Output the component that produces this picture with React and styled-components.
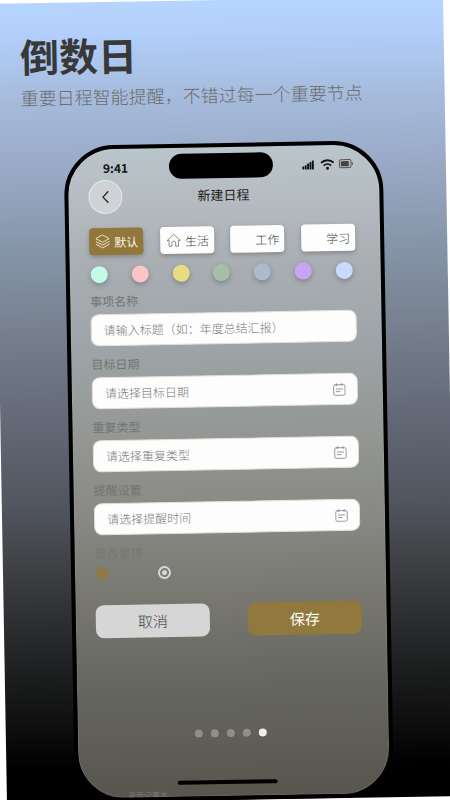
import React, { useState } from "react";
import styled, { createGlobalStyle, css } from "styled-components";

const categories = [
  { title: "默认", icon: "layers" },
  { title: "生活", icon: "home" },
  { title: "工作" },
  { title: "学习" },
];

const colors = [
  { name: "薄荷", value: "#c4fbe6" },
  { name: "粉色", value: "#fbc4c6" },
  { name: "黄色", value: "#e8dc82" },
  { name: "绿色", value: "#a8bfa6" },
  { name: "灰蓝", value: "#aabccb" },
  { name: "紫色", value: "#c9a4f4" },
  { name: "浅蓝", value: "#c8dbfb" },
];

const fields = [
  { id: "title", label: "事项名称", placeholder: "请输入标题（如：年度总结汇报）" },
  { id: "date", label: "目标日期", placeholder: "请选择目标日期", picker: true },
  { id: "repeat", label: "重复类型", placeholder: "请选择重复类型", picker: true },
  { id: "remind", label: "提醒设置", placeholder: "请选择提醒时间", picker: true },
];

const ChipIcon = ({ name, active }) => (
  <svg width="15" height="15" viewBox="0 0 15 15" fill="none" stroke={active ? "#f6efdc" : "#808080"} strokeWidth="0.9" strokeLinejoin="round" strokeLinecap="round">
    {name === "layers" && (
      <>
        <path d="M7.5 1 14 4.6 7.5 8.2 1 4.6Z" />
        <path d="M1 7.4 7.5 11 14 7.4" />
        <path d="M1 10.2 7.5 13.8 14 10.2" />
      </>
    )}
    {name === "home" && (
      <path d="M1 7.6 7.5 1.4 14 7.6H12.2V13.4H9.4V10.2A1.9 1.9 0 0 0 5.6 10.2V13.4H2.8V7.6Z" />
    )}
  </svg>
);

const CalendarIcon = () => (
  <svg width="13" height="13" viewBox="0 0 13 13" fill="none" stroke="#8c8c8c" strokeWidth="0.9" strokeLinecap="round">
    <rect x="0.8" y="1.7" width="11.4" height="10.6" rx="1.6" />
    <path d="M3.8 0.6V2.6M9.2 0.6V2.6M3.4 6H9.6M3.4 8.6H7.2" />
  </svg>
);

const StatusIcons = () => (
  <svg width="52" height="14" viewBox="0 0 52 14">
    <g fill="#111">
      <rect x="0.4" y="9" width="1.9" height="3" rx="0.5" />
      <rect x="2.8" y="7.6" width="1.9" height="4.4" rx="0.5" />
      <rect x="5.2" y="6" width="1.9" height="6" rx="0.5" />
      <rect x="7.6" y="4.6" width="1.9" height="7.4" rx="0.5" />
      <rect x="10" y="3" width="1.9" height="9" rx="0.5" />
      <circle cx="25.5" cy="11" r="1.5" />
    </g>
    <g fill="none" stroke="#111" strokeWidth="1.9">
      <path d="M19.2 5.6A9 9 0 0 1 31.8 5.6" />
      <path d="M21.9 8.4A5.2 5.2 0 0 1 29.1 8.4" />
    </g>
    <rect x="37.5" y="2.8" width="11.6" height="8" rx="1.6" fill="none" stroke="#555" strokeWidth="1" />
    <rect x="38.9" y="4.2" width="8" height="5.2" rx="0.6" fill="#444" />
    <path d="M50.4 5.4V8.2" stroke="#555" strokeWidth="1" />
  </svg>
);

const App = () => {
  const [category, setCategory] = useState("默认");
  const [pinned, setPinned] = useState("yes");

  return (
    <Viewport>
      <GlobalStyle />
      <Poster>
        <Heading>倒数日</Heading>
        <Subtitle>重要日程智能提醒，不错过每一个重要节点</Subtitle>
        <Phone>
          <StatusBar>
            <Clock>9:41</Clock>
            <Island />
            <StatusRight>
              <StatusIcons />
            </StatusRight>
          </StatusBar>
          <NavBar>
            <BackButton type="button" aria-label="返回">
              <svg width="8" height="14" viewBox="0 0 8 14" fill="none" stroke="#222" strokeWidth="1.3" strokeLinecap="round" strokeLinejoin="round">
                <path d="M6.5 1.8 1.5 7 6.5 12.2" />
              </svg>
            </BackButton>
            <NavTitle>新建日程</NavTitle>
          </NavBar>
          <Form onSubmit={(e) => e.preventDefault()}>
            <Chips>
              {categories.map((item) => (
                <Chip
                  type="button"
                  key={item.title}
                  $active={item.title === category}
                  onClick={() => setCategory(item.title)}
                >
                  <ChipIcon name={item.icon} active={item.title === category} />
                  {item.title}
                </Chip>
              ))}
            </Chips>
            <Swatches>
              {colors.map((color) => (
                <Swatch type="button" key={color.name} aria-label={color.name} $color={color.value} />
              ))}
            </Swatches>
            {fields.map((field) => (
              <Field key={field.id}>
                <Label htmlFor={field.id}>{field.label}</Label>
                <InputBox>
                  <Input id={field.id} placeholder={field.placeholder} readOnly={field.picker} />
                  {field.picker && <CalendarIcon />}
                </InputBox>
              </Field>
            ))}
            <PinGroup>
              <Legend>是否置顶</Legend>
              <Options>
                <Option>
                  <Radio name="pin" checked={pinned === "yes"} onChange={() => setPinned("yes")} />
                  是
                </Option>
                <Option>
                  <Radio name="pin" checked={pinned === "no"} onChange={() => setPinned("no")} />
                  否
                </Option>
              </Options>
            </PinGroup>
            <Actions>
              <Action type="button">取消</Action>
              <Action type="submit" $primary>
                保存
              </Action>
            </Actions>
          </Form>
          <Pager>
            {[0, 1, 2, 3, 4].map((page) => (
              <PagerDot key={page} $active={page === 4} />
            ))}
          </Pager>
          <HomeBar />
          <Footnote>录音记事本</Footnote>
        </Phone>
      </Poster>
    </Viewport>
  );
};

export default App;

const GlobalStyle = createGlobalStyle`
  * {
    box-sizing: border-box;
  }
  body {
    margin: 0;
    background: #fff;
    font-family: "Noto Sans CJK SC", "Noto Sans", sans-serif;
  }
  button,
  input {
    font-family: inherit;
  }
`;

const center = css`
  display: flex;
  align-items: center;
  justify-content: center;
`;

const Viewport = styled.div`
  display: flex;
  min-height: 100vh;
  overflow: hidden;
`;

const Poster = styled.main`
  flex: 1;
  display: flex;
  flex-direction: column;
  padding: 30px 63px 0 68px;
  overflow: hidden;
  transform: rotate(-1deg);
  background: linear-gradient(
    #b6d5fe 0%,
    #b1cffa 4%,
    #a6bbdc 12%,
    #9aabc8 20%,
    #8797ab 30%,
    #757e8c 42%,
    #656b79 51%,
    #51555f 63%,
    #404246 70%,
    #282a2c 79%,
    #111211 89%,
    #000 96%
  );
`;

const Heading = styled.h1`
  margin: 0 0 8px -42px;
  font-size: 39px;
  line-height: 44px;
  font-weight: 700;
  color: #383838;
`;

const Subtitle = styled.p`
  margin: 0 -40px 0 -42px;
  font-size: 18px;
  line-height: 24px;
  font-weight: 300;
  color: #6c6c6c;
  white-space: nowrap;
`;

const Phone = styled.section`
  flex: 1;
  display: flex;
  flex-direction: column;
  margin-top: 37px;
  padding: 6px 25px 0 20px;
  border: 4px solid #000;
  border-radius: 50px;
  overflow: hidden;
  box-shadow: inset 0 0 1px 1px rgba(210, 215, 215, 0.12);
  background: linear-gradient(
    #b9c6cb 0%,
    #b4bac0 9%,
    #a9aeb2 18%,
    #9da4a7 31%,
    #949794 44%,
    #898a86 56%,
    #777770 70%,
    #666660 83%,
    #57554e 100%
  );
`;

const StatusBar = styled.div`
  display: grid;
  grid-template-columns: 1fr auto 1fr;
  align-items: center;
`;

const Clock = styled.span`
  padding-left: 15px;
  font-size: 12px;
  line-height: 16px;
  font-weight: 700;
  color: #111;
`;

const Island = styled.div`
  width: 104px;
  height: 25px;
  border-radius: 13px;
  background: #000;
`;

const StatusRight = styled.div`
  display: flex;
  justify-content: flex-end;
`;

const NavBar = styled.header`
  display: grid;
  grid-template-columns: 34px 1fr 30px;
  align-items: center;
`;

const BackButton = styled.button`
  ${center}
  width: 34px;
  height: 34px;
  padding: 0;
  border: 1px solid #e6e8ea;
  border-radius: 50%;
  background: #d0d3d6;
`;

const NavTitle = styled.h2`
  margin: 0;
  font-size: 13px;
  line-height: 20px;
  font-weight: 400;
  text-align: center;
  color: #222;
`;

const Form = styled.form`
  margin-top: 14px;
`;

const Chips = styled.div`
  display: flex;
  justify-content: space-between;
`;

const Chip = styled.button`
  display: flex;
  align-items: center;
  gap: 4px;
  width: 54px;
  height: 27px;
  padding: 0 0 0 6px;
  border: 0;
  border-radius: 4px;
  font-size: 12px;
  font-weight: ${({ $active }) => ($active ? 400 : 300)};
  white-space: nowrap;
  color: ${({ $active }) => ($active ? "#fbf6ea" : "#444")};
  background: ${({ $active }) => ($active ? "#91773a" : "#fdfdfd")};
  box-shadow: 0 2px 4px rgba(60, 60, 60, 0.35);
`;

const Swatches = styled.div`
  display: flex;
  justify-content: space-between;
  margin: 11px 0 10px;
  padding: 0 3px 0 1px;
`;

const Swatch = styled.button`
  width: 17px;
  height: 17px;
  padding: 0;
  border: 0;
  border-radius: 50%;
  background: ${({ $color }) => $color};
  box-shadow: 0 2px 5px rgba(60, 70, 80, 0.4);
`;

const Field = styled.div`
  margin-bottom: 10px;
`;

const labelText = css`
  display: block;
  padding: 0;
  font-size: 12px;
  line-height: 16px;
  font-weight: 400;
  color: #747571;
`;

const Label = styled.label`
  ${labelText}
  margin-bottom: 5px;
`;

const InputBox = styled.div`
  display: flex;
  align-items: center;
  height: 32px;
  padding: 0 11px 0 12px;
  border: 1px solid #e4dfd3;
  border-radius: 8px;
  background: #fdfdfd;
`;

const Input = styled.input`
  flex: 1;
  min-width: 0;
  padding: 0;
  border: 0;
  outline: 0;
  background: none;
  font-size: 12px;
  line-height: 18px;
  color: #333;
  &::placeholder {
    color: #7c7c7c;
    font-weight: 300;
    opacity: 1;
  }
`;

const PinGroup = styled.fieldset`
  margin: 0;
  padding: 0;
  border: 0;
`;

const Legend = styled.legend`
  ${labelText}
  margin-bottom: 4px;
  color: #777771;
`;

const Options = styled.div`
  display: flex;
  gap: 30px;
  padding-left: 1px;
`;

const Option = styled.label`
  display: flex;
  align-items: center;
  gap: 8px;
  font-size: 11px;
  line-height: 16px;
  color: #7e7e78;
`;

const Radio = styled.input.attrs({ type: "radio" })`
  appearance: none;
  width: 13px;
  height: 13px;
  margin: 0;
  border: 2px solid #d6d6d6;
  border-radius: 50%;
  background: radial-gradient(circle, #d6d6d6 2px, transparent 3px);
  &:checked {
    border-color: #94773a;
    background: radial-gradient(circle, #94773a 2px, #86795a 3px, #86795a 4px);
  }
`;

const Actions = styled.div`
  display: flex;
  gap: 38px;
  margin-top: 24px;
`;

const Action = styled.button`
  flex: 1;
  height: 33px;
  padding: 0;
  border: 0;
  border-radius: 8px;
  font-size: 15px;
  line-height: 20px;
  font-weight: ${({ $primary }) => ($primary ? 400 : 300)};
  color: ${({ $primary }) => ($primary ? "#fff" : "#444")};
  background: ${({ $primary }) => ($primary ? "#91783c" : "#d6d6d6")};
`;

const Pager = styled.div`
  ${center}
  gap: 8px;
  margin-top: auto;
`;

const PagerDot = styled.span`
  width: 8px;
  height: 8px;
  border-radius: 50%;
  background: ${({ $active }) => ($active ? "#f0efea" : "#8f8e8a")};
`;

const HomeBar = styled.div`
  align-self: center;
  width: 100px;
  height: 4px;
  margin: 43px 8px 0 0;
  border-radius: 2px;
  background: #000;
`;

const Footnote = styled.small`
  padding-left: 29px;
  margin: 4px 0 -4px;
  font-size: 8px;
  line-height: 12px;
  color: #7a7872;
`;
